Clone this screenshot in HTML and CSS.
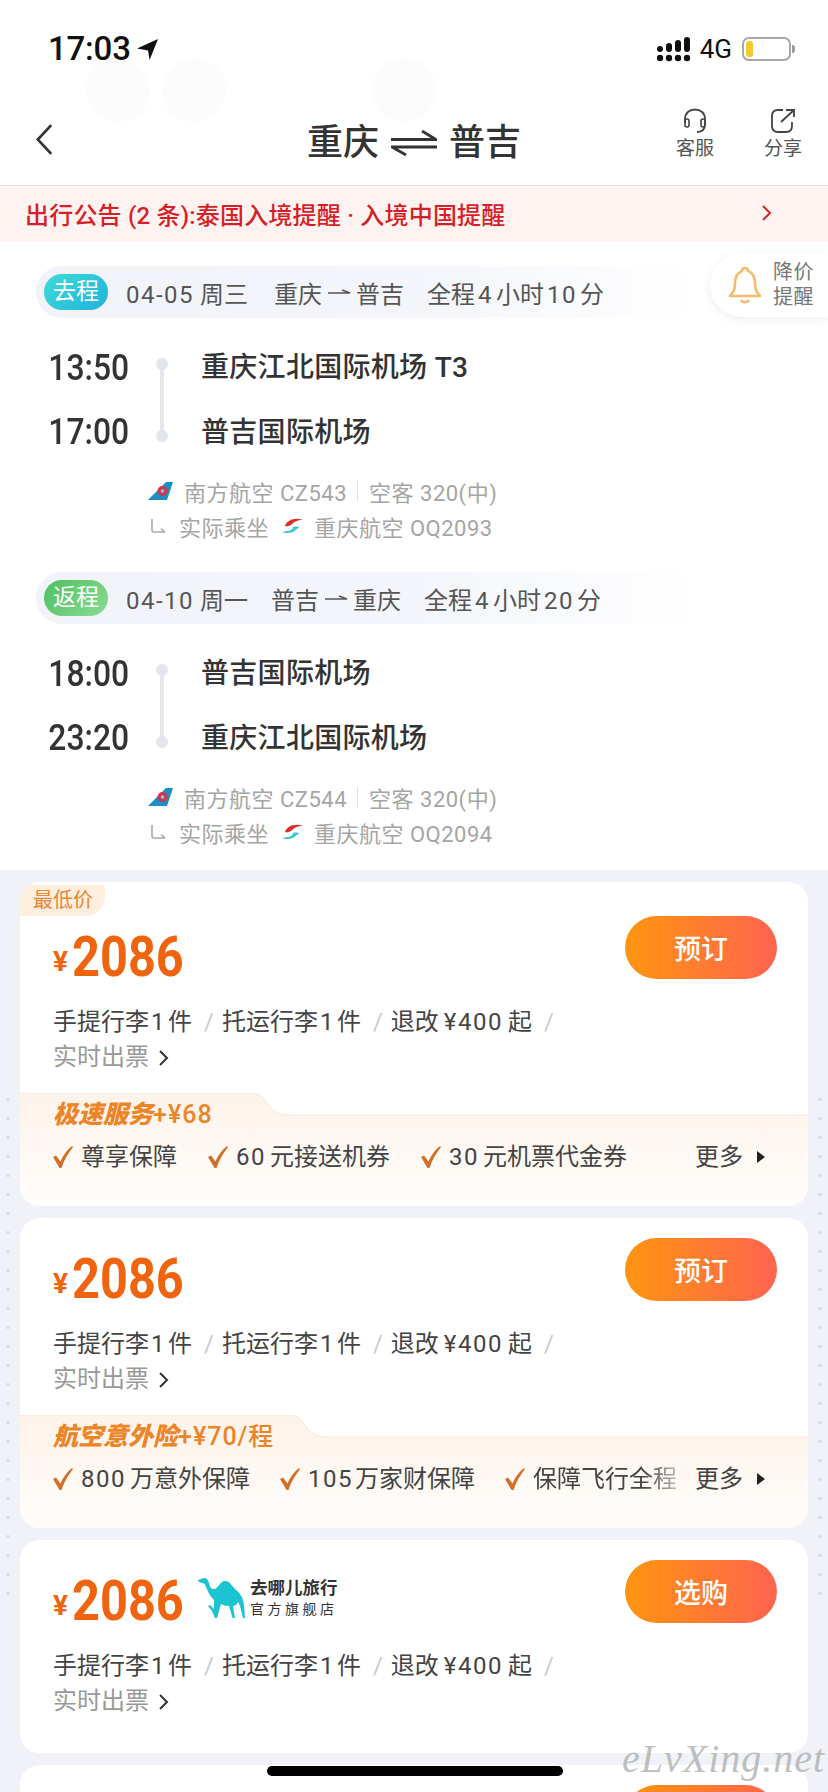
FILE: index.html
```html
<!DOCTYPE html>
<html lang="zh-CN">
<head>
<meta charset="utf-8">
<title>重庆 普吉</title>
<link rel="stylesheet" href="styles.css">
</head>
<body>
<svg class="defs" width="0" height="0" aria-hidden="true">
  <symbol id="cz" viewBox="0 0 25 18">
    <path d="M0 18L18 0H25L19 18Z" fill="#1b8fc4"/>
    <circle cx="14.5" cy="9" r="5" fill="#c9394f"/>
    <circle cx="14.5" cy="9" r="1.8" fill="#8ec5dc"/>
  </symbol>
  <symbol id="oq" viewBox="0 0 22 15">
    <path d="M4 8C6 2 14-1 22 2C16 2 13 4 10 7C8 8 6 9 4 8Z" fill="#d8322c"/>
    <path d="M1 14C6 13 12 13 12 9C15 8 19 9 18 10C14 11 14 15 7 15C5 15 3 15 1 14Z" fill="#3cc8d6"/>
  </symbol>
  <symbol id="turn" viewBox="0 0 17 16">
    <path d="M2 1V12Q2 14 4 14H15M11 10.500L15 14" fill="none" stroke="#aaa" stroke-width="1.600"/>
  </symbol>
  <symbol id="tick" viewBox="0 0 20 22">
    <path d="M0 11L3 9.500L7.500 15.500C10 9.500 14 4 19 0L20 1C15 7.500 11 14 8.500 22H6.500Z" fill="#d2702a"/>
  </symbol>
  <symbol id="dash" viewBox="0 0 24 10">
    <path d="M1 6H23L15 3" fill="none" stroke="#555" stroke-width="1.500"/>
  </symbol>
  <symbol id="chev" viewBox="0 0 11 18">
    <path d="M2 2L9 9L2 16" fill="none" stroke="#333" stroke-width="2"/>
  </symbol>
  <symbol id="tri" viewBox="0 0 8 12">
    <path d="M0 0L8 6L0 12Z" fill="#222"/>
  </symbol>
</svg>

<div class="page">
  <div class="ghost ghost-a"></div>
  <div class="ghost ghost-b"></div>
  <div class="ghost ghost-c"></div>

  <div class="status">
    <div class="status-left">
      <span class="clock">17:03</span>
      <svg class="loc" viewBox="0 0 20 20"><path d="M0 9L20 0L12 20L10.500 11Z" fill="#111"/></svg>
    </div>
    <div class="status-right">
      <svg class="signal" viewBox="0 0 34 25">
        <rect x="0" y="9" width="6" height="6" rx="3"/><rect x="9" y="6" width="6" height="9" rx="3"/><rect x="18" y="3" width="6" height="12" rx="3"/><rect x="27" y="0" width="6" height="15" rx="3"/>
        <circle cx="3" cy="21" r="3.200"/><circle cx="12" cy="21" r="3.200"/><circle cx="21" cy="21" r="3.200"/><circle cx="30" cy="21" r="3.200"/>
      </svg>
      <span class="net">4G</span>
      <div class="battery"><div class="battery-fill"></div></div>
      <div class="battery-nub"></div>
    </div>
  </div>

  <div class="nav">
    <svg class="back" viewBox="0 0 18 32"><path d="M16 2L3 16L16 30" fill="none" stroke="#333" stroke-width="2.600"/></svg>
    <div class="title">
      <span>重庆</span>
      <svg class="swap" viewBox="0 0 46 26"><path d="M0 9.500H45L31 1M46 17H1L15 25" fill="none" stroke="#333" stroke-width="2.800"/></svg>
      <span>普吉</span>
    </div>
    <div class="nav-actions">
      <div class="nav-act">
        <svg class="nav-ico" viewBox="0 0 26 26"><path d="M3 15V11C3 5 7.500 1.500 13 1.500S23 5 23 11V16C23 21 21 24 15 24" fill="none" stroke="#444" stroke-width="1.800"/><rect x="3" y="11" width="4" height="8" rx="2" fill="none" stroke="#444" stroke-width="1.600"/><rect x="19" y="11" width="4" height="8" rx="2" fill="none" stroke="#444" stroke-width="1.600"/></svg>
        <span>客服</span>
      </div>
      <div class="nav-act">
        <svg class="nav-ico" viewBox="0 0 26 26"><path d="M13 2H8C4 2 2 4 2 8V18C2 22 4 24 8 24H16C20 24 22 22 22 18V14M11 14L24 2M16 2H24V9" fill="none" stroke="#444" stroke-width="1.800"/></svg>
        <span>分享</span>
      </div>
    </div>
  </div>

  <div class="notice">
    <span>出行公告 (2 条):泰国入境提醒 · 入境中国提醒</span>
    <svg class="notice-chev" viewBox="0 0 11 18"><path d="M2 2L9 9L2 16" fill="none" stroke="#d8242c" stroke-width="2"/></svg>
  </div>

  <div class="flights">
    <div class="alert">
      <svg class="bell" viewBox="0 0 32 38"><path d="M16 2C18 2 19 3 19 5C25 7 26 12 26 18C26 24 28 27 31 30H1C4 27 6 24 6 18C6 12 7 7 13 5C13 3 14 2 16 2ZM12 34C14 37 18 37 20 34" fill="none" stroke="#f5bb6e" stroke-width="2.600" stroke-linejoin="round"/></svg>
      <div class="alert-text">降价<br>提醒</div>
    </div>

    <section class="leg">
      <div class="pill">
        <span class="pill-tag tag-go">去程</span>
        <span class="pill-date date-wide"><span class="d">04-05</span> 周三</span>
        <span class="pill-route">重庆<svg class="dash"><use href="#dash"/></svg>普吉</span>
        <span class="pill-dur">全程<span class="n">4</span>小时<span class="n">10</span>分</span>
      </div>
      <div class="schedule">
        <div class="times"><span class="time">13:50</span><span class="time">17:00</span></div>
        <div class="rail"></div>
        <div class="ports"><span>重庆江北国际机场 T3</span><span>普吉国际机场</span></div>
      </div>
      <div class="info">
        <div class="info-row"><svg class="cz"><use href="#cz"/></svg><span>南方航空 CZ543</span><i class="sep"></i><span>空客 320(中)</span></div>
        <div class="info-row"><svg class="turn"><use href="#turn"/></svg><span>实际乘坐</span><svg class="oq"><use href="#oq"/></svg><span>重庆航空 OQ2093</span></div>
      </div>
    </section>

    <section class="leg">
      <div class="pill">
        <span class="pill-tag tag-back">返程</span>
        <span class="pill-date"><span class="d">04-10</span> 周一</span>
        <span class="pill-route">普吉<svg class="dash"><use href="#dash"/></svg>重庆</span>
        <span class="pill-dur">全程<span class="n">4</span>小时<span class="n">20</span>分</span>
      </div>
      <div class="schedule">
        <div class="times"><span class="time">18:00</span><span class="time">23:20</span></div>
        <div class="rail"></div>
        <div class="ports"><span>普吉国际机场</span><span>重庆江北国际机场</span></div>
      </div>
      <div class="info">
        <div class="info-row"><svg class="cz"><use href="#cz"/></svg><span>南方航空 CZ544</span><i class="sep"></i><span>空客 320(中)</span></div>
        <div class="info-row"><svg class="turn"><use href="#turn"/></svg><span>实际乘坐</span><svg class="oq"><use href="#oq"/></svg><span>重庆航空 OQ2094</span></div>
      </div>
    </section>
  </div>

  <div class="list">
    <article class="card card-first">
      <span class="low">最低价</span>
      <div class="head">
        <div class="price"><span class="yen">¥</span><span class="num">2086</span></div>
        <button class="buy">预订</button>
      </div>
      <div class="tags">
        <span>手提行李<span class="c">1</span>件</span><i>/</i><span>托运行李<span class="c">1</span>件</span><i>/</i><span>退改<span class="m">¥400</span>起</span><i>/</i>
        <span class="more-line">实时出票<svg class="chev"><use href="#chev"/></svg></span>
      </div>
      <div class="svc">
        <svg class="svc-bg" viewBox="0 0 788 113" preserveAspectRatio="none">
          <defs><linearGradient id="g1" x1="0" y1="0" x2="0" y2="1"><stop offset="0" stop-color="#fdf3ea"/><stop offset="1" stop-color="#fffdfb"/></linearGradient></defs>
          <path d="M0 0H232C248 0 246 22 268 22H788V113H0Z" fill="url(#g1)"/>
          <path d="M0 0H232C248 0 246 22 268 22H788" fill="none" stroke="#fbe6d2"/>
        </svg>
        <div class="svc-title"><b class="svc-name">极速服务</b>+¥68</div>
        <div class="svc-items">
          <span class="svc-item gap-a"><svg class="tick"><use href="#tick"/></svg>尊享保障</span>
          <span class="svc-item gap-a"><svg class="tick"><use href="#tick"/></svg><span class="s">60</span>元接送机券</span>
          <span class="svc-item"><svg class="tick"><use href="#tick"/></svg><span class="s">30</span>元机票代金券</span>
          <span class="svc-more">更多<svg class="tri"><use href="#tri"/></svg></span>
        </div>
      </div>
    </article>

    <article class="card">
      <div class="head">
        <div class="price"><span class="yen">¥</span><span class="num">2086</span></div>
        <button class="buy">预订</button>
      </div>
      <div class="tags">
        <span>手提行李<span class="c">1</span>件</span><i>/</i><span>托运行李<span class="c">1</span>件</span><i>/</i><span>退改<span class="m">¥400</span>起</span><i>/</i>
        <span class="more-line">实时出票<svg class="chev"><use href="#chev"/></svg></span>
      </div>
      <div class="svc">
        <svg class="svc-bg" viewBox="0 0 788 113" preserveAspectRatio="none">
          <defs><linearGradient id="g2" x1="0" y1="0" x2="0" y2="1"><stop offset="0" stop-color="#fdf3ea"/><stop offset="1" stop-color="#fffdfb"/></linearGradient></defs>
          <path d="M0 0H270C286 0 284 22 306 22H788V113H0Z" fill="url(#g2)"/>
          <path d="M0 0H270C286 0 284 22 306 22H788" fill="none" stroke="#fbe6d2"/>
        </svg>
        <div class="svc-title"><b class="svc-name">航空意外险</b>+¥70/程</div>
        <div class="svc-items">
          <span class="svc-item gap-b"><svg class="tick"><use href="#tick"/></svg><span class="s">800</span>万意外保障</span>
          <span class="svc-item gap-b"><svg class="tick"><use href="#tick"/></svg><span class="s one">105</span>万家财保障</span>
          <span class="svc-item svc-fade"><svg class="tick"><use href="#tick"/></svg>保障飞行全程</span>
          <span class="svc-more">更多<svg class="tri"><use href="#tri"/></svg></span>
        </div>
      </div>
    </article>

    <article class="card card-plain">
      <div class="head">
        <div class="price">
          <span class="yen">¥</span><span class="num">2086</span>
          <div class="brand">
            <svg class="camel" viewBox="0 0 47 40"><path d="M0 2L6 0C9 0 10 2 11 5C12 9 13 11 16 11C20 11 22 3 27 3C32 3 34 8 37 11C42 15 45 19 46 27L47 40H45L42 28L40 24C38 27 37 28 35 28L37 40H34.500L31 28C28 28 25 27 23 26L19 40H17L14 33L10 28L12 27L16 31L16 22C12 18 10 14 8 9C7 6 6 5 4 5L1 4Z" fill="#1cc3d0"/></svg>
            <div class="brand-text"><b>去哪儿旅行</b><span>官方旗舰店</span></div>
          </div>
        </div>
        <button class="buy">选购</button>
      </div>
      <div class="tags">
        <span>手提行李<span class="c">1</span>件</span><i>/</i><span>托运行李<span class="c">1</span>件</span><i>/</i><span>退改<span class="m">¥400</span>起</span><i>/</i>
        <span class="more-line">实时出票<svg class="chev"><use href="#chev"/></svg></span>
      </div>
    </article>

    <article class="card card-plain">
      <div class="head">
        <div class="price"></div>
        <button class="buy"></button>
      </div>
    </article>
  </div>

  <div class="watermark">eLvXing.net</div>
  <div class="home"></div>
</div>
</body>
</html>
```

FILE: styles.css
```css
* { box-sizing: border-box; }
html, body { margin: 0; padding: 0; background: #fff; }
body { font-family: Roboto, "Noto Sans CJK SC", sans-serif; color: #333; }
.defs { position: absolute; }
.page { position: relative; width: 828px; height: 1792px; overflow: hidden; background: #fff; }

.ghost { position: absolute; top: 58px; width: 64px; height: 64px; border-radius: 50%; background: #fcfcfc; }
.ghost-a { left: 86px; }
.ghost-b { left: 162px; }
.ghost-c { left: 372px; }

.status { position: relative; height: 94px; display: flex; justify-content: space-between; align-items: flex-start; padding: 31px 33px 0 48px; }
.status-left { display: flex; align-items: center; gap: 6px; }
.clock { font-size: 33px; font-weight: 500; line-height: 36px; letter-spacing: -0.2px; color: #111; }
.loc { width: 21px; height: 21px; }
.status-right { display: flex; align-items: center; margin-top: 4px; }
.signal { width: 34px; height: 25px; fill: #111; margin-left: -1px; }
.net { font-size: 26px; line-height: 28px; color: #111; margin: 0 10px 0 9px; }
.battery { width: 49px; height: 24px; border: 2px solid #a8a8a8; border-radius: 7px; padding: 2px; }
.battery-fill { width: 7px; height: 16px; border-radius: 3px; background: #f3cb2c; }
.battery-nub { width: 3px; height: 8px; margin-left: 1px; border-radius: 0 3px 3px 0; background: #999; }

.nav { position: relative; height: 92px; display: flex; align-items: center; padding: 0 26px 0 34px; border-bottom: 1px solid #e9e1dc; }
.back { width: 20px; height: 33px; margin-top: 0; }
.title { position: absolute; left: 307px; top: 24px; display: flex; align-items: center; gap: 12px; font-size: 36px; line-height: 50px; font-weight: 500; color: #333; }
.swap { width: 46px; height: 26px; }
.nav-actions { margin-left: auto; display: flex; gap: 50px; }
.nav-act { display: flex; flex-direction: column; align-items: center; width: 38px; font-size: 19px; line-height: 26px; color: #555; margin-top: -10px; }
.nav-ico { width: 26px; height: 26px; margin-bottom: 2px; }

.notice { height: 56px; display: flex; align-items: center; justify-content: space-between; padding: 0 56px 2px 25px; background: #fef3f1; color: #d81e28; font-size: 24px; font-weight: 500; letter-spacing: 0.2px; }
.notice-chev { width: 11px; height: 18px; }

.flights { position: relative; height: 628px; padding: 24px 0 0 36px; }
.alert { position: absolute; right: 0; top: 11px; width: 118px; height: 64px; display: flex; align-items: center; gap: 11px; padding-left: 18px; background: #fff; border-radius: 32px 0 0 32px; box-shadow: 0 2px 8px rgba(120, 130, 150, 0.14); z-index: 1; }
.bell { width: 34px; height: 38px; flex: none; }
.alert-text { font-size: 20px; line-height: 25px; letter-spacing: 0.5px; color: #777; }

.leg { height: 306px; }
.pill { height: 52px; width: 660px; display: flex; align-items: center; padding-left: 8px; border-radius: 26px 0 0 26px; background: linear-gradient(90deg, #f1f3f9 0%, #f4f6fb 60%, #fff 100%); font-size: 24px; color: #555; }
.pill-tag { width: 64px; height: 36px; border-radius: 18px; color: #fff; font-size: 23px; line-height: 36px; text-align: center; margin-right: 18px; }
.tag-go { background: linear-gradient(135deg, #3fdcd6, #1fb2dd); }
.tag-back { background: linear-gradient(135deg, #4cc05e, #8bdc95); }
.pill-date { margin-right: 23px; }
.date-wide { margin-right: 26px; }
.d { letter-spacing: 1.5px; }
.pill-route { display: flex; align-items: center; margin-right: 23px; }
.dash { width: 24px; height: 10px; margin: 0 5px; }
.n { margin: 0 3px; letter-spacing: 1.5px; }

.schedule { display: flex; height: 135px; margin-top: 22px; position: relative; }
.times { width: 88px; display: flex; flex-direction: column; gap: 0; }
.time { display: block; height: 64px; line-height: 56px; font-size: 37px; font-weight: 500; color: #333; transform: scaleX(0.86); transform-origin: right center; text-align: right; }
.rail { position: absolute; left: 124px; top: 24px; width: 4px; height: 72px; background: #e3e6ea; }
.rail::before, .rail::after { content: ""; position: absolute; left: -4px; width: 12px; height: 12px; border-radius: 50%; background: #e3e6ea; }
.rail::before { top: -6px; }
.rail::after { bottom: -6px; }
.ports { position: absolute; left: 165px; top: 0; display: flex; flex-direction: column; font-size: 28px; font-weight: 500; letter-spacing: 0.3px; color: #333; }
.ports span { height: 65px; line-height: 56px; }

.info { padding-left: 112px; margin-top: -2px; color: #a5a5a5; font-size: 22px; }
.info-row { height: 35px; display: flex; align-items: center; letter-spacing: 0.5px; }
.cz { width: 25px; height: 18px; margin-right: 11px; }
.sep { width: 1px; height: 20px; background: #e2e2e2; margin: 0 11px 0 10px; }
.turn { width: 17px; height: 16px; margin: 0 12px 0 2px; }
.oq { width: 22px; height: 15px; margin: 0 11px 0 12px; }

.list { position: relative; padding: 12px 20px 0; background: #f0f2f7; display: flex; flex-direction: column; gap: 12px; height: 922px; }
.list::before, .list::after { content: ""; position: absolute; top: 220px; width: 4px; height: 510px; background-image: radial-gradient(circle, #d9dde5 1.5px, transparent 2px); background-size: 4px 19px; }
.list::before { left: 6px; }
.list::after { right: 6px; }

.card { position: relative; flex: none; background: #fff; border-radius: 20px; padding-top: 20px; overflow: hidden; }
.card-first { padding-top: 34px; }
.card-plain { padding-bottom: 34px; }
.low { position: absolute; left: 0; top: 3px; width: 85px; height: 31px; line-height: 31px; padding-left: 13px; font-size: 20px; color: #e8853a; background: #fdeedd; border-radius: 12px 4px 20px 0; }

.head { display: flex; justify-content: space-between; align-items: flex-start; padding: 0 31px 0 33px; height: 63px; }
.price { display: flex; align-items: flex-end; height: 63px; color: #f0640f; }
.yen { font-size: 28px; font-weight: 700; line-height: 30px; margin-bottom: 2px; width: 19px; }
.num { font-size: 56px; font-weight: 700; line-height: 58px; width: 110px; transform: scaleX(0.87); transform-origin: left center; white-space: nowrap; margin-bottom: -8px; position: relative; top: -1px; }
.brand { display: flex; align-items: center; margin-left: 16px; align-self: center; margin-top: 12px; gap: 5px; }
.camel { width: 47px; height: 40px; flex: none; }
.brand-text { display: flex; flex-direction: column; color: #333; width: 90px; }
.brand-text b { font-size: 17.500px; line-height: 22px; font-weight: 700; white-space: nowrap; }
.brand-text span { font-size: 14px; line-height: 20px; letter-spacing: 3.500px; white-space: nowrap; }
.buy { width: 152px; height: 63px; border: 0; border-radius: 32px; background: linear-gradient(90deg, #ff9510, #ff6450); color: #fff; font: 500 27px/63px Roboto, "Noto Sans CJK SC", sans-serif; padding: 3px 0 0; }

.tags { margin-top: 26px; padding-left: 33px; width: 600px; font-size: 24px; line-height: 35px; color: #444; display: flex; flex-wrap: wrap; }
.tags i { font-style: normal; color: #ccc; margin: 0 8px 0 12px; }
.c { margin: 0 2px; letter-spacing: 1.5px; }
.m { margin: 0 5px; letter-spacing: 1.5px; }
.more-line { display: flex; align-items: center; color: #999; width: 100%; }
.chev { width: 11px; height: 18px; margin-left: 9px; }

.svc { position: relative; margin-top: 18px; height: 113px; padding-left: 33px; }
.svc-bg { position: absolute; left: 0; top: 0; width: 100%; height: 100%; }
.svc-title { position: relative; height: 44px; line-height: 44px; font-size: 25px; letter-spacing: 1px; font-weight: 500; color: #ec8428; }
.svc-name { font-size: 25px; letter-spacing: 0; font-weight: 900; font-style: italic; }
.svc-items { position: relative; display: flex; align-items: center; height: 40px; line-height: 40px; font-size: 24px; color: #444; padding-right: 43px; }
.svc-item { display: flex; align-items: center; white-space: nowrap; }
.s { margin-right: 4px; letter-spacing: 1.5px; }
.one { margin-right: 2px; }
.gap-a { margin-right: 31px; }
.gap-b { margin-right: 30px; }
.svc-fade { -webkit-mask-image: linear-gradient(90deg, #000 80%, rgba(0,0,0,0.35) 100%); mask-image: linear-gradient(90deg, #000 80%, rgba(0,0,0,0.35) 100%); }
.tick { width: 20px; height: 22px; margin-right: 8px; flex: none; }
.svc-more { position: absolute; right: 43px; top: 0; line-height: 40px; display: flex; align-items: center; }
.tri { width: 8px; height: 12px; margin-left: 14px; }

.watermark { position: absolute; left: 622px; top: 1734px; font-family: "Liberation Serif", serif; font-style: italic; font-size: 40px; line-height: 50px; letter-spacing: 1px; color: rgba(170, 170, 170, 0.75); }
.home { position: absolute; left: 267px; top: 1766px; width: 296px; height: 10px; border-radius: 5px; background: #000; }
```
